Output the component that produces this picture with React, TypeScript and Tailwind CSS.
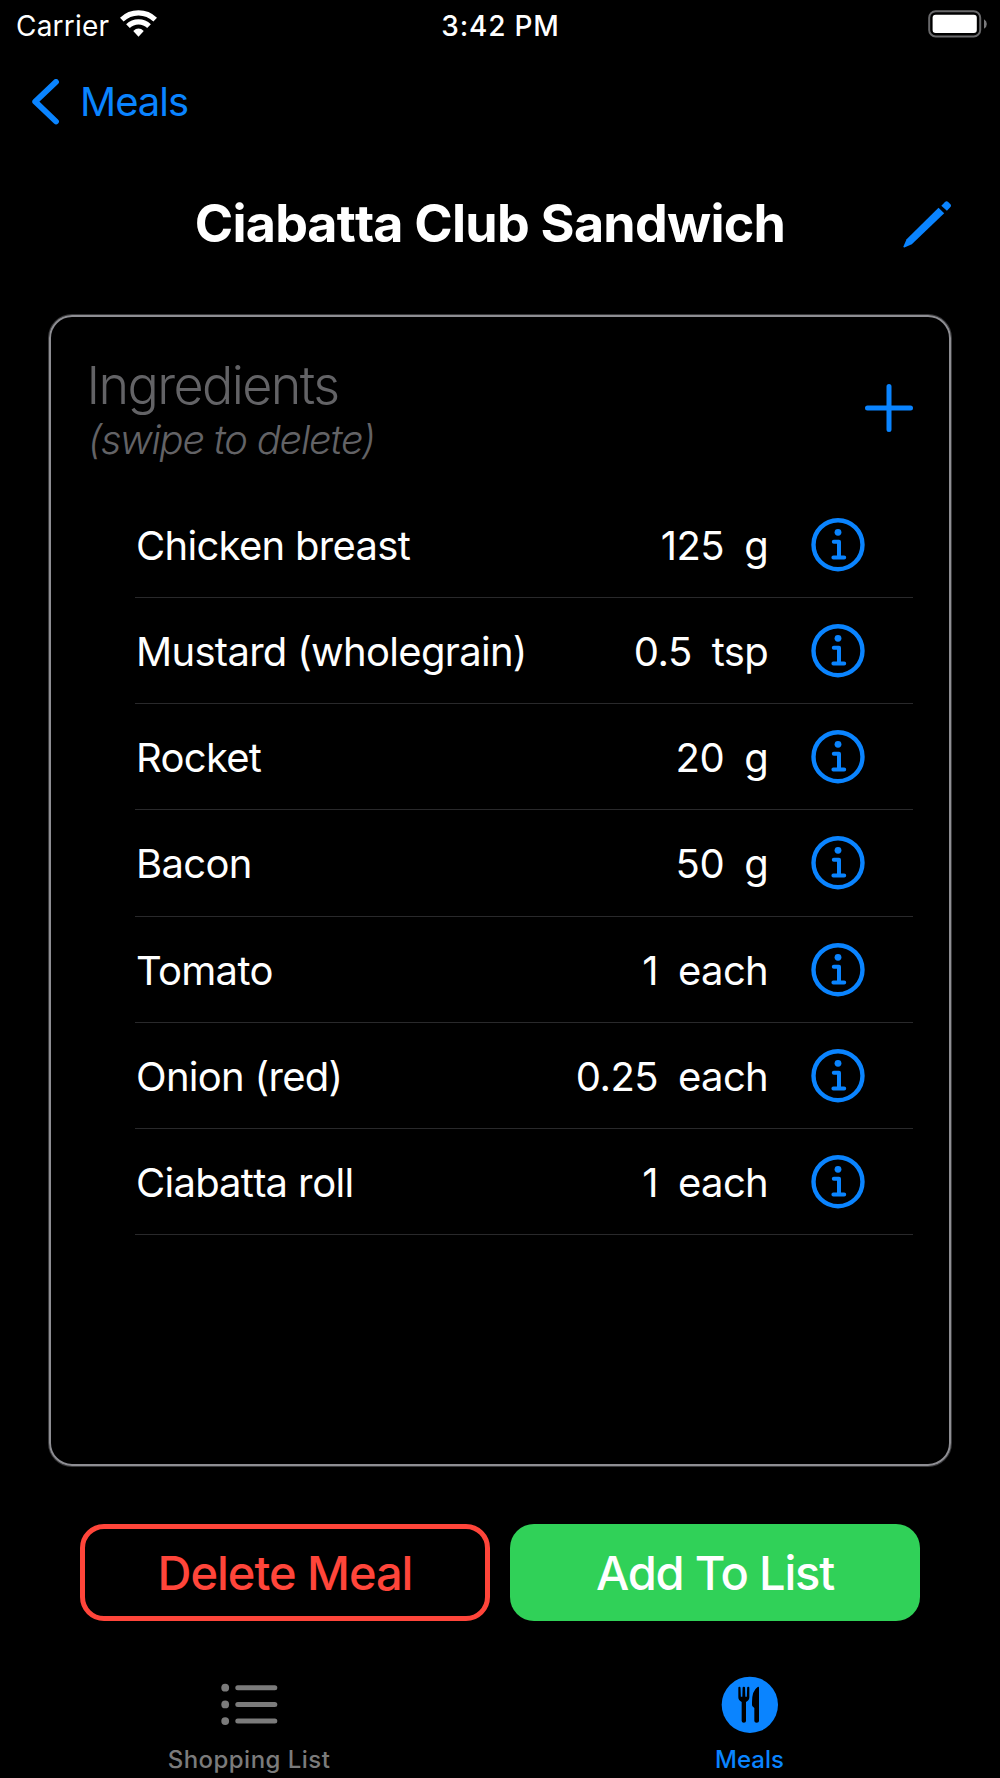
import React, { ReactNode } from "react";

type Ingredient = {
	name: string;
	quantity: string;
	unit: string;
};

const ingredients: Ingredient[] = [
	{ name: "Chicken breast", quantity: "125", unit: "g" },
	{ name: "Mustard (wholegrain)", quantity: "0.5", unit: "tsp" },
	{ name: "Rocket", quantity: "20", unit: "g" },
	{ name: "Bacon", quantity: "50", unit: "g" },
	{ name: "Tomato", quantity: "1", unit: "each" },
	{ name: "Onion (red)", quantity: "0.25", unit: "each" },
	{ name: "Ciabatta roll", quantity: "1", unit: "each" },
];

const App = () => {
	return (
		<div className="flex flex-col w-full h-[1778px] overflow-hidden bg-black text-white font-['Inter',sans-serif] leading-none">
			<StatusBar />

			<nav className="flex items-center h-[101px] pl-8 text-[#0a84ff]">
				<ChevronIcon />
				<span className="ml-[18px] text-[40px] tracking-[-1px]">Meals</span>
			</nav>

			<div className="flex items-center h-[142px] pl-[77px] pr-12">
				<h1 className="flex-1 pt-px text-center text-[52px] font-bold tracking-[-0.75px] [font-kerning:none]">
					Ciabatta Club Sandwich
				</h1>
				<PencilIcon />
			</div>

			<section className="mt-[21px] mx-auto w-[902px] h-[1151px] rounded-[23px] border-2 border-[#8e8e93] ring-1 ring-[#8e8e93]/40">
				<div className="flex items-center justify-between pt-[42px] pl-[35.5px] pr-9 text-[#636366] font-light">
					<div>
						<h2 className="text-[52px] leading-[54px] tracking-[-1.6px]">
							Ingredients
						</h2>
						<p className="pl-[1.5px] text-[40px] leading-[54px] italic tracking-[-1.25px]">
							(swipe to delete)
						</p>
					</div>
					<PlusIcon />
				</div>

				<ul className="mt-[24.5px] ml-[84px] mr-9">
					{ingredients.map((item) => (
						<IngredientRow key={item.name} item={item} />
					))}
				</ul>
			</section>

			<div className="grid grid-cols-2 gap-5 mt-[58px] px-20 h-[97px] text-[47px] font-medium">
				<button className="rounded-[24px] border-5 border-[#ff453a] text-[#ff453a] tracking-[-1.03px]">
					Delete Meal
				</button>
				<button className="rounded-[24px] bg-[#30d158] text-white tracking-[-1.2px]">
					Add To List
				</button>
			</div>

			<footer className="grid grid-cols-2 pt-[55px]">
				<Tab
					label="Shopping List"
					Icon={<ListIcon />}
					className="pr-0.5 text-[#7b7b7b] tracking-[0.47px]"
				/>
				<Tab label="Meals" Icon={<MealsIcon />} className="pr-px text-[#0a84ff]" />
			</footer>
		</div>
	);
};

export default App;

const StatusBar = () => {
	return (
		<header className="grid grid-cols-3 items-center h-[51px] pl-4 pr-[13px] text-[28px]">
			<div className="flex items-center gap-[11px]">
				<span className="tracking-[0.2px]">Carrier</span>
				<svg className="w-[37px] h-[27px] -mt-1" viewBox="0 0 110 82" fill="none">
					<path
						d="M4.3 29.5A73 73 0 0 1 105.7 29.5M23 48.9A46 46 0 0 1 87 48.9"
						stroke="#fff"
						strokeWidth="16"
					/>
					<path d="M39 64Q55 49 71 64L55 81Z" fill="#fff" />
				</svg>
			</div>
			<span className="pr-0.5 text-center font-medium tracking-[0.8px]">
				3:42 PM
			</span>
			<svg className="justify-self-end w-[59px] h-7 -mt-[3px]" viewBox="0 0 59 28">
				<rect
					x="1.2"
					y="1.2"
					width="51"
					height="25.2"
					rx="6.5"
					fill="none"
					stroke="#69696b"
					strokeWidth="2"
				/>
				<rect x="4.6" y="4.8" width="44.2" height="18.2" rx="3" fill="#fff" />
				<path d="M56 9.2Q58.8 10.8 58.8 14T56 18.8Z" fill="#7a7a7c" />
			</svg>
		</header>
	);
};

const IngredientRow = ({ item }: { item: Ingredient }) => {
	const kerning = item.name.includes("tt") ? "[font-kerning:none]" : "";

	return (
		<li className="flex items-center h-[106.25px] pt-px pr-12 border-b border-[#29292b] text-[40px]">
			<span className={`flex-1 pt-0.5 pl-px tracking-[-0.7px] ${kerning}`}>
				{item.name}
			</span>
			<span className="pt-0.5 tracking-[-0.5px]">{item.quantity}</span>
			<span className="ml-5 mr-[43px] pt-0.5 tracking-[-0.7px]">
				{item.unit}
			</span>
			<InfoIcon />
		</li>
	);
};

const Tab = ({
	label,
	Icon,
	className,
}: {
	label: string;
	Icon: ReactNode;
	className: string;
}) => {
	return (
		<div className={`flex flex-col items-center ${className}`}>
			{Icon}
			<span className="mt-[14px] text-2xl leading-6 font-medium">{label}</span>
		</div>
	);
};

const ChevronIcon = () => (
	<svg className="w-[30px] h-[46px]" viewBox="0 0 30 46" fill="none">
		<path
			d="M24 2.9L3.2 22.7L24 42.5"
			stroke="currentColor"
			strokeWidth="5.8"
			strokeLinecap="round"
			strokeLinejoin="round"
		/>
	</svg>
);

const PencilIcon = () => (
	<svg className="w-[49px] h-[47px] mt-[3px]" viewBox="0 0 49 47" fill="#0a84ff">
		<path d="M0.4 45.6L3.6 38.2L35.5 6.8L41.2 12.2L8.8 43.3L1.4 46.4Q0.2 46.6 0.4 45.6Z" />
		<path d="M38.3 4.7L41.8 1.2Q43.5 -0.4 45.2 1.1L47.2 3Q48.8 4.6 47.2 6.3L43.9 9.8Z" />
	</svg>
);

const PlusIcon = () => (
	<svg className="w-12 h-12 -mt-2.5" viewBox="0 0 48 48" fill="none">
		<path
			d="M24 2.5V45.5M2.5 24H45.5"
			stroke="#0a84ff"
			strokeWidth="5"
			strokeLinecap="round"
		/>
	</svg>
);

const InfoIcon = () => (
	<svg className="w-[54px] h-[54px]" viewBox="0 0 54 54" fill="none">
		<circle cx="27" cy="26.7" r="24.5" stroke="#0a84ff" strokeWidth="4.4" />
		<circle cx="27" cy="14.3" r="3.4" fill="#0a84ff" />
		<path
			d="M22.8 23.8H28V39.3M22.4 39.5H33.2"
			stroke="#0a84ff"
			strokeWidth="4"
			strokeLinecap="round"
			strokeLinejoin="round"
		/>
	</svg>
);

const ListIcon = () => (
	<svg className="w-[58px] h-[58px]" viewBox="-1 0 58 58" fill="currentColor">
		<circle cx="4.2" cy="11.7" r="3.9" />
		<circle cx="4.2" cy="28.4" r="3.9" />
		<circle cx="4.2" cy="45.1" r="3.9" />
		<rect x="14.3" y="9.2" width="42" height="5" rx="2.5" />
		<rect x="14.3" y="25.9" width="42" height="5" rx="2.5" />
		<rect x="14.3" y="42.6" width="42" height="5" rx="2.5" />
	</svg>
);

const MealsIcon = () => (
	<svg className="w-[58px] h-[58px]" viewBox="-2 -2 174 174">
		<circle cx="84.5" cy="84.5" r="84.5" fill="#0a84ff" />
		<path
			d="M50 33Q50 30 53.2 30T56.5 33L57.5 60H62L62.8 33Q63 30 66.5 30T70.2 33L71 60H75.5L76.5 33Q76.5 30 79.8 30T83 33V62Q83 71 73 76V133Q73 138 66.5 138T60 133V76Q50 71 50 62Z"
			fill="#000"
		/>
		<path
			d="M112 33Q112 29 108 31Q91 42 91 76V84Q91 88 94 90L98 94V133Q98 138 105 138T112 133Z"
			fill="#000"
		/>
	</svg>
);
